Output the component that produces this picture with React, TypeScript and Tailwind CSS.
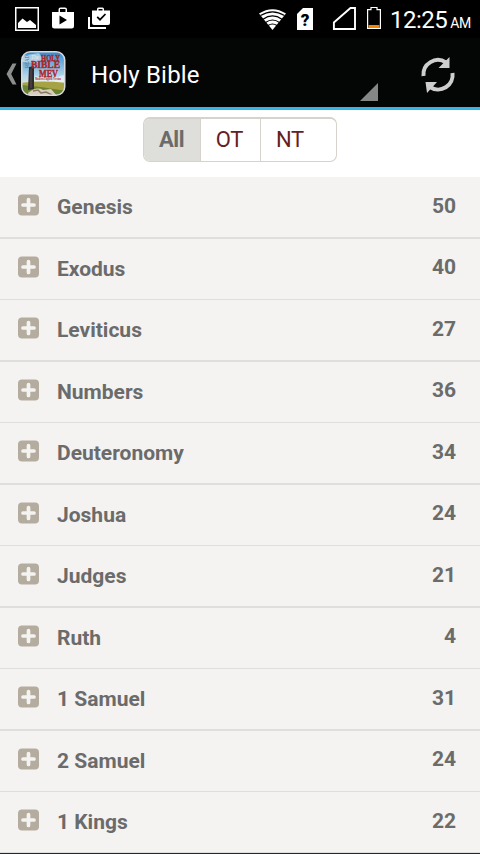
import React from "react";

const books: [string, number][] = [
  ["Genesis", 50],
  ["Exodus", 40],
  ["Leviticus", 27],
  ["Numbers", 36],
  ["Deuteronomy", 34],
  ["Joshua", 24],
  ["Judges", 21],
  ["Ruth", 4],
  ["1 Samuel", 31],
  ["2 Samuel", 24],
  ["1 Kings", 22],
];

function StatusBar() {
  return (
    <div className="flex h-[38px] shrink-0 items-start justify-between bg-black text-white">
      <svg width="120" height="38" viewBox="0 0 120 38" fill="#fff">
        <rect x="15.75" y="7.75" width="22.5" height="22.5" fill="none" stroke="#fff" strokeWidth="1.5" />
        <path d="M18 28V23L22.5 18.5L27 22L30 20L36 25V28Z" />
        <path d="M52 12H58.5V9.5Q58.5 7.5 60.5 7.5H65Q67 7.5 67 9.5V12H74V26Q74 28.5 71.5 28.5H54.5Q52 28.5 52 26ZM60 12H65.5V9H60ZM59.5 15.5V24.5L67 20Z" fillRule="evenodd" />
        <path d="M92 10.5H97V9Q97 7.5 98.5 7.5H102.5Q104 7.5 104 9V10.5H110V23Q110 25 108 25H94Q92 25 92 23ZM98.5 10.5H102.5V9H98.5Z" fillRule="evenodd" />
        <path d="M97.2 16.8L100 19.7L105.5 14" fill="none" stroke="#000" strokeWidth="1.7" />
        <path d="M89 17V28H106" fill="none" stroke="#fff" strokeWidth="2" />
      </svg>
      <div className="flex">
        <svg width="140" height="38" viewBox="250 0 140 38">
          <path d="M259 13.5Q272.5 5 286 13.5L272.5 30Z" fill="#fff" />
          <g fill="none" stroke="#000" strokeWidth="1.2">
            <path d="M260.5 15.6Q272.5 8.2 284.5 15.6" />
            <path d="M263 19.2Q272.5 12.6 282 19.2" />
            <path d="M265.5 22.5Q272.5 17.5 279.5 22.5" />
            <path d="M268 25.5Q272.5 22.5 277 25.5" />
          </g>
          <path d="M303 8H313V30H297V14Z" fill="#fff" />
          <text x="305" y="26" textAnchor="middle" className="font-['Roboto'] text-[17px] font-black">?</text>
          <path d="M333.9 29V22.5L350.5 8H355V29Z" fill="none" stroke="#fff" strokeWidth="1.9" />
          <path d="M367.6 9.6H371V7.5H377V9.6H380.4V28.4H367.6Z" fill="none" stroke="#fff" strokeWidth="1.2" />
          <rect x="368.5" y="25" width="11" height="3" fill="#f78300" />
        </svg>
        <div className="flex w-[90px] items-baseline gap-[3px] whitespace-nowrap pt-[5px]">
          <span className="text-[24px] leading-[31px] tracking-[-0.5px]">12:25</span>
          <span className="text-[14px] leading-[20px] tracking-[-0.5px]">AM</span>
        </div>
      </div>
    </div>
  );
}

function AppIcon() {
  return (
    <svg width="46" height="46" viewBox="0 0 46 46" className="ml-[4px]">
      <defs>
        <clipPath id="iconShape"><rect x="1" y="1" width="42.5" height="43" rx="8" /></clipPath>
        <linearGradient id="sky" x2="0" y2="1">
          <stop offset="0" stopColor="#2f88cf" />
          <stop offset=".55" stopColor="#b5d8ea" />
          <stop offset=".72" stopColor="#d6e3df" />
        </linearGradient>
      </defs>
      <g clipPath="url(#iconShape)">
        <rect width="46" height="46" fill="url(#sky)" />
        <path d="M0 5L18 2L22 8L16 12L0 11ZM14 25L29 28L43 24V32H11Z" fill="#fff" opacity=".5" />
        <path d="M0 32Q20 29 46 32V46H0Z" fill="#a7a345" />
        <path d="M0 34L20 36L46 40V46H0Z" fill="#6b8432" />
        <path d="M7 42Q16 35 22 39L30 38L37 46H8Z" fill="#d9cdb9" />
        <path d="M12 40L17 39L20 42L25 41L31 44" fill="none" stroke="#897961" strokeWidth="1.5" />
        <path d="M8 16L13 15V38L7 39Z" fill="#302c31" />
        <path d="M10 18V37" stroke="#5d4d4e" />
        <text transform="translate(8 17) rotate(-90)" className="font-['Liberation_Serif'] text-[6px]" fill="#66645e" textLength="13" lengthAdjust="spacingAndGlyphs">READ</text>
        <text x="10" y="8" className="font-['Liberation_Serif'] text-[6px] italic" fill="#f4eed9" textLength="8" lengthAdjust="spacingAndGlyphs">The</text>
        <g className="font-['Liberation_Serif'] font-bold" fill="#ac2528" stroke="#ac2528" strokeWidth=".4">
          <text x="20" y="9.8" className="text-[9px]" textLength="19" lengthAdjust="spacingAndGlyphs">HOLY</text>
          <text x="10" y="17" className="text-[9.5px]" textLength="29" lengthAdjust="spacingAndGlyphs">BIBLE</text>
          <text x="18" y="25.5" className="text-[10px]" textLength="19" lengthAdjust="spacingAndGlyphs">MEV</text>
        </g>
        <text x="14" y="29" className="font-['Liberation_Serif'] text-[3.5px] font-bold" fill="#ac2528" textLength="26" lengthAdjust="spacingAndGlyphs">Modern English Version</text>
      </g>
      <rect x=".75" y=".75" width="43" height="43.5" rx="8.5" fill="none" stroke="#d8dadd" strokeWidth="1.5" />
    </svg>
  );
}

function ActionBar() {
  return (
    <header className="flex h-[72px] shrink-0 items-start border-b-[3px] border-[#33b5e5] bg-[#040606] text-white">
      <div className="flex pt-[13px]">
        <svg width="17" height="46" viewBox="0 0 17 46">
          <path d="M16.5 12.5H12.5L6.5 23L12.5 33.5H16.5L11.2 23Z" fill="#8c8d8d" />
        </svg>
        <AppIcon />
      </div>
      <h1 className="ml-[24px] w-[269px] pt-[23px] text-[24px] font-normal leading-[28px] tracking-[0.2px]">Holy Bible</h1>
      <svg className="-ml-[269px] w-[389px] shrink-0" height="69" viewBox="91 38 389 69">
        <path d="M378 83V101H360Z" fill="#858686" />
        <g fill="none" stroke="#cecece" strokeWidth="4">
          <path d="M423.5 76A14.5 14.5 0 0 1 446 62.5" />
          <path d="M452.5 73A14.5 14.5 0 0 1 430 87" />
        </g>
        <path d="M449.5 57V68H438.5ZM425.5 82H437L427 93Z" fill="#cecece" />
      </svg>
    </header>
  );
}

function Filter() {
  return (
    <div className="flex h-[67px] shrink-0 items-start bg-white pl-[143px] pt-[7px]">
      <div className="flex h-[45px] w-[194px] overflow-hidden rounded-[7px] border border-t-2 border-[#d6d2cc] text-[22px] leading-[42px] text-[#66201e]">
        <button className="w-[57px] border-r border-[#d6d2cc] bg-[#dededa] pr-[1px] font-bold tracking-[-0.5px] text-[#6b6b6b]">All</button>
        <button className="w-[60px] border-r border-[#d6d2cc] pr-[2px] tracking-[-0.2px]">OT</button>
        <button className="pl-[15px] tracking-[-0.3px]">NT</button>
      </div>
    </div>
  );
}

function PlusIcon() {
  return (
    <svg width="22" height="22" viewBox="0 0 22 22">
      <rect x="0" y=".5" width="21" height="21" rx="4" fill="#b5aca0" />
      <path d="M10.5 5.5V16.5M5 11H16" stroke="#f4f3f1" strokeWidth="3.7" strokeLinecap="round" />
    </svg>
  );
}

export default function App() {
  return (
    <div className="flex h-[854px] w-[480px] flex-col overflow-hidden bg-white font-['Roboto',sans-serif]">
      <StatusBar />
      <ActionBar />
      <Filter />
      <ul className="min-h-0 flex-1 overflow-hidden bg-[#f4f3f1] text-[21px] font-bold leading-[28px] text-[#6b6b6b]">
        {books.map(([name, chapters], i) => (
          <li
            key={name}
            className={`flex items-start border-[#dededb] ${
              i % 2 === 0 && i < books.length - 1 ? "h-[62px] border-b-2" : "h-[61px] border-b"
            }`}
          >
            <span className="w-[57px] pl-[18px] pt-[17px]"><PlusIcon /></span>
            <span className="flex-1 pt-[16px]">{name}</span>
            <span className={`pr-[24px] ${i % 2 === 0 ? "pt-[15px]" : "pt-[14px]"}`}>{chapters}</span>
          </li>
        ))}
      </ul>
      <div className="h-px shrink-0 bg-[#25272c]" />
    </div>
  );
}
